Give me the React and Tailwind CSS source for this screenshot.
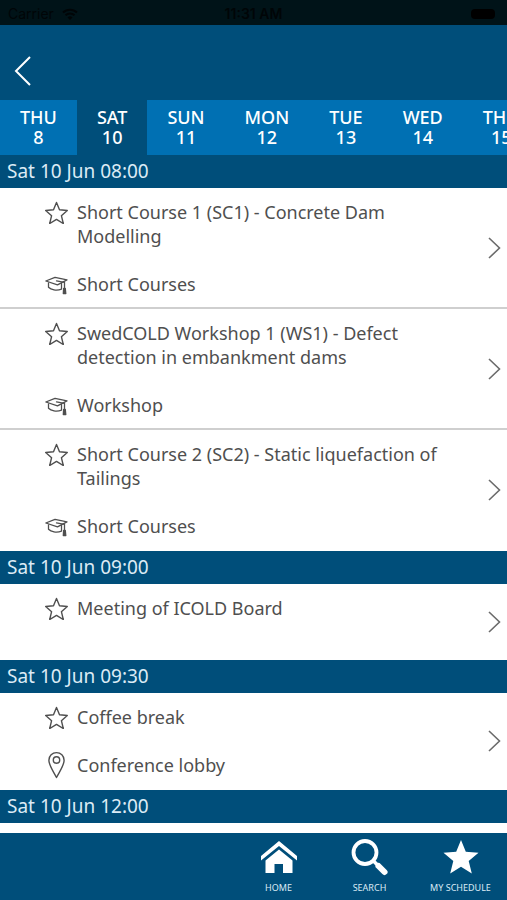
import { clsx } from 'clsx';

const DAYS = [
  { day: 'THU', date: 8 },
  { day: 'SAT', date: 10, active: true },
  { day: 'SUN', date: 11 },
  { day: 'MON', date: 12 },
  { day: 'TUE', date: 13 },
  { day: 'WED', date: 14 },
  { day: 'THU', date: 15 },
];

const SLOTS = [
  {
    time: 'Sat 10 Jun 08:00',
    sessions: [
      { title: 'Short Course 1 (SC1) - Concrete Dam Modelling', type: 'Short Courses' },
      { title: 'SwedCOLD Workshop 1 (WS1) - Defect detection in embankment dams', type: 'Workshop' },
      { title: 'Short Course 2 (SC2) - Static liquefaction of Tailings', type: 'Short Courses' },
    ],
  },
  { time: 'Sat 10 Jun 09:00', sessions: [{ title: 'Meeting of ICOLD Board' }] },
  { time: 'Sat 10 Jun 09:30', sessions: [{ title: 'Coffee break', location: 'Conference lobby' }] },
  { time: 'Sat 10 Jun 12:00', sessions: [] },
];

function StarOutline() {
  return (
    <svg viewBox="0 0 24 24" className="w-6 h-6" fill="none" stroke="currentColor" strokeWidth="1.4" strokeLinejoin="round">
      <path d="M11.500 2.500l3 7.300 7.800.7-5.900 5.200 1.900 7.800-6.800-4.100-6.800 4.100 1.900-7.800-5.900-5.200 7.800-.7z" />
    </svg>
  );
}

function CapIcon() {
  return (
    <svg viewBox="0 0 24 24" className="w-6 h-6" fill="none" stroke="currentColor" strokeWidth="1.3" strokeLinejoin="round" strokeLinecap="round">
      <path d="M.8 9L10 5.300l12 2.500-9.500 5z" />
      <path d="M3.500 11v4.200c2.500 2.600 8 4 13 1.900v-5.800" />
      <path d="M11.500 8.800l8 1.500v5.500" />
      <path d="M18.600 16.500h1.700l.5 5h-2.500z" fill="currentColor" />
    </svg>
  );
}

function PinIcon() {
  return (
    <svg viewBox="0 0 24 28" className="w-6 h-7" fill="none" stroke="currentColor" strokeWidth="1.4" strokeLinejoin="round">
      <path d="M11.500 26.500C8.500 20.500 3.900 14.500 3.900 9.200a7.600 7.600 0 0 1 15.200 0c0 5.300-4.600 11.300-7.600 17.300z" />
      <circle cx="11.500" cy="9" r="3.200" />
    </svg>
  );
}

function Session({ session }) {
  return (
    <li className="border-b-2 border-[#cfcfcf] last:border-white">
      <a href="#session" className="flex items-center min-h-[74px] pt-3 pb-[11px] pl-[45px] pr-1">
        <div className="flex-1 self-start flex flex-col gap-6">
          <div className="flex gap-2">
            <button type="button" aria-label="Add to my schedule" className="self-start shrink-0">
              <StarOutline />
            </button>
            <h3 className="max-w-[384px]">{session.title}</h3>
          </div>
          {session.type && (
            <div className="flex gap-2">
              <CapIcon />
              <span>{session.type}</span>
            </div>
          )}
          {session.location && (
            <div className="flex items-center gap-2 h-6">
              <PinIcon />
              <span>{session.location}</span>
            </div>
          )}
        </div>
        <svg viewBox="0 0 16 24" className="w-4 h-6 shrink-0" fill="none" stroke="#6b6b6b" strokeWidth="1.6">
          <path d="M2 2l10.500 10L2 22" />
        </svg>
      </a>
    </li>
  );
}

export default function App() {
  return (
    <div className="h-screen flex flex-col bg-white font-['Noto_Sans',sans-serif] text-lg leading-6 text-[#4f4f4f]">
      {/* Status bar */}
      <div className="shrink-0 h-[25px] grid grid-cols-3 items-center px-2 pt-0.5 bg-[#001318] text-[#000507] text-sm leading-5 font-[Inter,sans-serif]">
        <div className="flex items-center gap-2">
          <span>Carrier</span>
          <svg viewBox="0 0 16 12" className="w-4 h-3" fill="none" stroke="currentColor" strokeWidth="2">
            <path d="M1 4.500a10 10 0 0 1 14 0M3.500 7.300a6.400 6.400 0 0 1 9 0" />
            <path d="M8 12L5.500 9.500a3.500 3.500 0 0 1 5 0z" fill="currentColor" stroke="none" />
          </svg>
        </div>
        <span className="text-center font-semibold">11:31 AM</span>
        <div className="justify-self-end w-6 h-[10px] mr-1 rounded-sm bg-black" />
      </div>

      <header className="shrink-0 h-[75px] flex items-center px-3 pt-4 bg-[#004e7a]">
        <button type="button" aria-label="Back" className="text-white">
          <svg viewBox="0 0 20 30" className="w-5 h-[30px]" fill="none" stroke="currentColor" strokeWidth="2">
            <path d="M18 1L4 15l14 14" />
          </svg>
        </button>
      </header>

      <nav className="shrink-0 h-[55px] flex overflow-hidden bg-[#0070b3] text-white font-medium leading-5">
        {DAYS.map(d => (
          <button key={d.date} type="button" className={clsx('shrink-0 px-5 pb-px', d.active && 'bg-[#004e7a]')}>
            <span className="block">{d.day}</span>
            <span className="block">{d.date}</span>
          </button>
        ))}
      </nav>

      <main className="flex-1 overflow-hidden">
        {SLOTS.map(slot => (
          <section key={slot.time}>
            <h2 className="h-[33px] flex items-center px-[7px] pb-px bg-[#004e7a] text-[#dcebf5] text-[19px]">{slot.time}</h2>
            <ul>
              {slot.sessions.map(s => <Session key={s.title} session={s} />)}
            </ul>
          </section>
        ))}
      </main>

      {/* Bottom bar */}
      <nav className="shrink-0 h-[67px] flex justify-end pr-px bg-[#004e7a] text-[#dcebf5] text-[9px] leading-3">
        <a href="#home" className="w-[91px] flex flex-col items-center gap-[5px] pt-1">
          <svg viewBox="0 0 40 40" className="w-10 h-10 text-white" fill="currentColor">
            <path d="M20 4L2 19v4.500L20 9l18 14.500V19z" />
            <path d="M20 12.500L6.500 23.500V36h9v-9h8.500v9h9.500V23.500z" />
          </svg>
          HOME
        </a>
        <a href="#search" className="w-[91px] flex flex-col items-center gap-[5px] pt-1">
          <svg viewBox="0 0 40 40" className="w-10 h-10 text-white" fill="none" stroke="currentColor" strokeLinecap="round">
            <circle cx="15" cy="15.500" r="11.500" strokeWidth="3.800" />
            <path d="M23.500 24l3 3" strokeWidth="3.500" />
            <path d="M28.500 29l6 6" strokeWidth="6" />
          </svg>
          SEARCH
        </a>
        <a href="#schedule" className="w-[91px] flex flex-col items-center gap-[5px] pt-1">
          <svg viewBox="0 0 40 40" className="w-10 h-10 text-white" fill="currentColor">
            <path d="M20 3l4.800 11.800 12.700.9-9.800 8.200 3.100 12.600L20 29.700 9.200 36.500l3.100-12.600-9.800-8.200 12.700-.9z" />
          </svg>
          MY SCHEDULE
        </a>
      </nav>
    </div>
  );
}
